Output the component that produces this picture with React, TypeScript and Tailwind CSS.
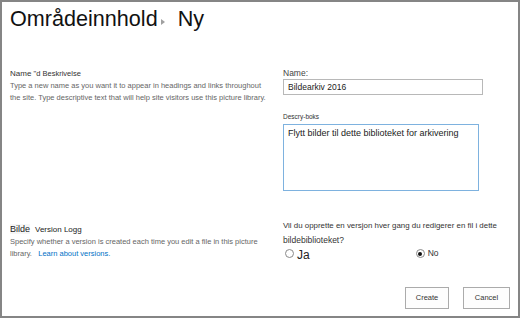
export default function App() {
  return (
    <div className="w-[520px] h-[318px] border-2 border-[#858585] bg-white text-[#262626] font-['Liberation_Sans',Arial,sans-serif] flex flex-col">
      {/* title */}
      <div className="h-[65px] flex items-start pl-[8px] pt-[4px]">
        <h1 className="text-[21.6px] leading-[26px] text-[#111]">Områdeinnhold</h1>
        <span className="mt-[13px] ml-[3px] w-0 h-0 border-y-[3px] border-y-transparent border-l-[4px] border-l-[#a0a0a0]" />
        <span className="ml-[13px] text-[21.6px] leading-[26px] text-[#111]">Ny</span>
      </div>

      {/* name and description */}
      <div className="flex">
        <div className="w-[281px] pl-[8px] pt-[1px]">
          <p className="text-[8px] leading-[12px] text-[#333]">
            Name <span className="text-[7.5px]">"d Beskrivelse</span>
          </p>
          <p className="text-[7.5px] leading-[12px] text-[#666] w-[262px]">
            Type a new name as you want it to appear in headings and links throughout the site. Type descriptive text that will help site visitors use this picture library.
          </p>
        </div>
        <div className="flex flex-col">
          <label className="text-[8.5px] leading-[12px] text-[#444]">Name:</label>
          <div className="w-[200px] h-[16px] border border-[#b8b8b8] pl-[4px] text-[8.5px] leading-[14px] text-[#222]">
            Bildearkiv 2016
          </div>
          <label className="mt-[17px] text-[6.5px] leading-[10px] text-[#333]">Descry-boks</label>
          <div className="mt-[2px] w-[196px] h-[67px] border-[1.5px] border-[#7eb2df] pl-[4px] pt-[2px] text-[9px] leading-[12px] text-[#222]">
            Flytt bilder til dette biblioteket for arkivering
          </div>
        </div>
      </div>

      {/* version history */}
      <div className="flex mt-[28px]">
        <div className="w-[281px] pl-[8px] pt-[2px]">
          <p className="leading-[12px] text-[#222]">
            <span className="text-[9px] bg-[#f6f6f6]">Bilde</span>
            <span className="text-[8px] ml-[5px]">Version Logg</span>
          </p>
          <p className="text-[7.5px] leading-[12px] text-[#666] w-[256px]">
            Specify whether a version is created each time you edit a file in this picture library.{'\u00a0\u00a0 '}
            <a className="text-[#0072c6]">Learn about versions.</a>
          </p>
        </div>
        <div className="flex flex-col">
          <p className="text-[7.9px] leading-[14px] text-[#333] whitespace-nowrap">
            Vil du opprette en versjon hver gang du redigerer en fil i dette
          </p>
          <p className="text-[8.5px] leading-[14px] text-[#333]">bildebiblioteket?</p>
          <div className="flex items-center h-[13px]">
            <span className="ml-[2px] w-[9px] h-[9px] rounded-full border border-[#8a8a8a] bg-white" />
            <span className="ml-[3px] text-[12px] leading-[13px] text-[#222] mt-[3px]">Ja</span>
            <span className="ml-[106px] w-[9px] h-[9px] rounded-full border border-[#8a8a8a] bg-white flex items-center justify-center">
              <span className="w-[4px] h-[4px] rounded-full bg-[#111]" />
            </span>
            <span className="ml-[3px] text-[8.5px] text-[#333]">No</span>
          </div>
        </div>
      </div>

      {/* buttons */}
      <div className="mt-auto flex justify-end gap-[14px] pr-[8px] pb-[7px]">
        <button className="w-[44px] h-[22px] border border-[#ababab] bg-[#fdfdfd] text-[7.5px] text-[#333]">Create</button>
        <button className="w-[47px] h-[22px] border border-[#ababab] bg-[#fdfdfd] text-[7.5px] text-[#333]">Cancel</button>
      </div>
    </div>
  );
}
